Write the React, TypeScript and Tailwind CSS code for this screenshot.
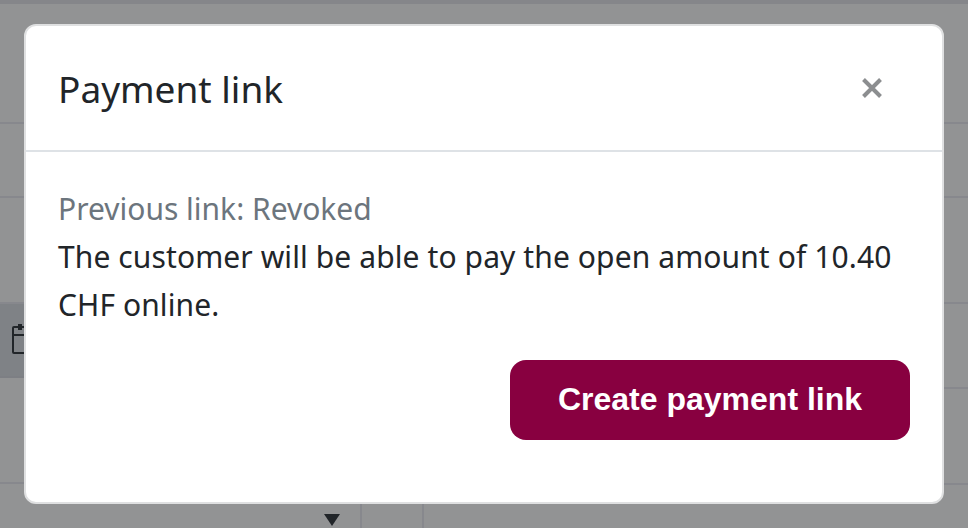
import React from "react";

export default function App() {
  return (
    <div className="relative w-[968px] h-[528px] overflow-hidden bg-[#929394] font-['Noto_Sans',sans-serif]">
      <div className="flex flex-col">
        <div className="h-[4px] bg-[#85868a]" />
        <div className="h-[120px] border-b-2 border-[#87888d]" />
        <div className="h-[74px] border-b-2 border-[#87888d]" />
        <div className="flex">
          <div className="w-[500px] flex flex-col">
            <div className="h-[106px] border-b-2 border-[#87888d]" />
            <div className="h-[74px] border-b-2 border-[#7d7f84] bg-[#7f8286] pl-[12px] pt-[20px]">
              <svg width="28" height="30" viewBox="0 0 28 30" fill="none" stroke="#212529" strokeWidth="2">
                <rect x="1" y="3" width="26" height="26" rx="1" />
                <path d="M1 11h26" />
                <path d="M8 0v6" strokeWidth="4" />
              </svg>
            </div>
            <div className="h-[106px] border-b-2 border-[#87888d]" />
            <div className="flex h-[44px]">
              <div className="w-[362px] flex justify-end pr-[20px] pt-[30px] border-r-2 border-[#87888d]">
                <div className="w-[16px] h-[12px] bg-[#212529] [clip-path:polygon(0_0,100%_0,50%_100%)]" />
              </div>
              <div className="w-[62px] border-r-2 border-[#87888d]" />
            </div>
          </div>
          <div className="flex-1 flex flex-col">
            <div className="h-[106px] border-b-2 border-[#87888d]" />
            <div className="h-[85px] border-b-2 border-[#87888d]" />
            <div className="h-[96px] border-b-2 border-[#87888d]" />
          </div>
        </div>
      </div>

      <div className="absolute left-[24px] top-[24px] w-[920px] h-[480px] bg-white rounded-[12px] border-2 border-[#dfe0e1] flex flex-col">
        <div className="h-[126px] border-b-2 border-[#dee2e6] flex items-center justify-between pl-[32px] pr-[60px]">
          <h5 className="text-[37px] leading-[48px] text-[#212529] m-0 mt-[2px]">Payment link</h5>
          <svg width="20" height="20" viewBox="0 0 20 20" stroke="#8c8e90" strokeWidth="4" strokeLinecap="butt">
            <path d="M1.5 1.5L18.5 18.5M18.5 1.5L1.5 18.5" />
          </svg>
        </div>
        <div className="flex-1 flex flex-col pl-[32px] pr-[32px] pt-[33px]">
          <div className="text-[30px] leading-[48px] text-[#6c757d]">Previous link: Revoked</div>
          <div className="text-[30px] leading-[48px] tracking-[0.1px] text-[#212529]">The customer will be able to pay the open amount of 10.40 CHF online.</div>
          <div className="flex justify-end mt-[31px]">
            <button className="w-[400px] h-[80px] pb-[2px] rounded-[16px] bg-[#880040] text-white text-[32px] font-bold font-['Liberation_Sans',sans-serif]">Create payment link</button>
          </div>
        </div>
      </div>
    </div>
  );
}
